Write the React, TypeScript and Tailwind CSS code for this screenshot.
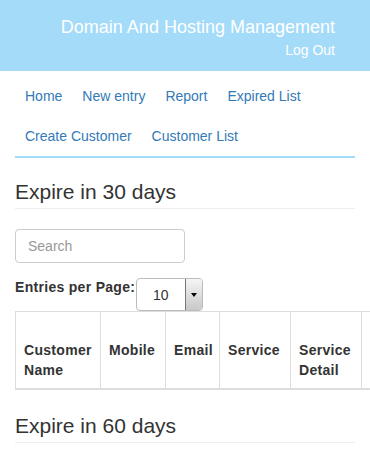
import React from 'react';

const navRows = [
  ['Home', 'New entry', 'Report', 'Expired List'],
  ['Create Customer', 'Customer List'],
];

const columns = [
  { label: 'Customer Name', w: 'w-[85px]' },
  { label: 'Mobile', w: 'w-[65px]' },
  { label: 'Email', w: 'w-[54px]' },
  { label: 'Service', w: 'w-[71px]' },
  { label: 'Service Detail', w: 'w-[71px]' },
  { label: '', w: 'w-[90px]' },
];

const SectionHeading: React.FC<{ title: string; className?: string }> = ({ title, className = '' }) => (
  <h3 className={`text-[21px] leading-[22px] pb-[5px] border-b border-[#eee] text-[#333] ${className}`}>{title}</h3>
);

const App: React.FC = () => {
  return (
    <div className="w-[370px] h-[457px] overflow-hidden bg-white text-[#333] text-[14px] leading-[20px] font-['Liberation_Sans',Arial,sans-serif]">
      {/* Header */}
      <header className="h-[71px] bg-[#a3dbf8] flex flex-col items-end pr-[35px] pt-[15px] text-white">
        <h1 className="text-[18px] leading-[24px]">Domain And Hosting Management</h1>
        <a className="text-[14px] leading-[20px] mt-[1px]">Log Out</a>
      </header>

      <div className="px-[15px]">
        {/* Nav */}
        <nav className="mt-[5px] border-b-2 border-[#a3dbf8]">
          {navRows.map((row, i) => (
            <ul key={i} className="flex">
              {row.map((item) => (
                <li key={item}>
                  <a className="block px-[10px] py-[10px] text-[#337ab7]">{item}</a>
                </li>
              ))}
            </ul>
          ))}
        </nav>

        <SectionHeading title="Expire in 30 days" className="mt-[23px]" />

        <div className="mt-[20px] w-[170px] h-[34px] border border-[#ccc] rounded-[4px] px-[12px] flex items-center text-[#999]">
          Search
        </div>

        <div className="mt-[14px] flex items-start">
          <label className="w-[121px] font-bold tracking-[0.3px] leading-[20px] text-[#333]">Entries per Page:</label>
          <div className="mt-[1px] w-[67px] h-[33px] border border-[#bbb] rounded-[4px] flex items-center overflow-hidden">
            <span className="flex-1 pl-[16px] text-[#333]">10</span>
            <span className="w-[17px] h-full border-l border-[#777] bg-gradient-to-b from-[#f6f6f6] to-[#c8c8c8] flex items-center justify-center">
              <span className="w-0 h-0 border-l-[3.5px] border-r-[3.5px] border-t-[4px] border-l-transparent border-r-transparent border-t-black" />
            </span>
          </div>
        </div>

        <div className="-mr-[15px] overflow-hidden">
          <table className="border-collapse border border-[#ddd] table-fixed w-[436px]">
            <thead>
              <tr>
                {columns.map((c, i) => (
                  <th
                    key={i}
                    className={`${c.w} border border-[#ddd] border-b-2 px-[8px] pt-[28px] pb-[8px] h-[77px] align-top text-left font-bold tracking-[0.3px] leading-[20px] text-[#333]`}
                  >
                    {c.label}
                  </th>
                ))}
              </tr>
            </thead>
          </table>
        </div>

        <SectionHeading title="Expire in 60 days" className="mt-[25px]" />
      </div>
    </div>
  );
};

export default App;
